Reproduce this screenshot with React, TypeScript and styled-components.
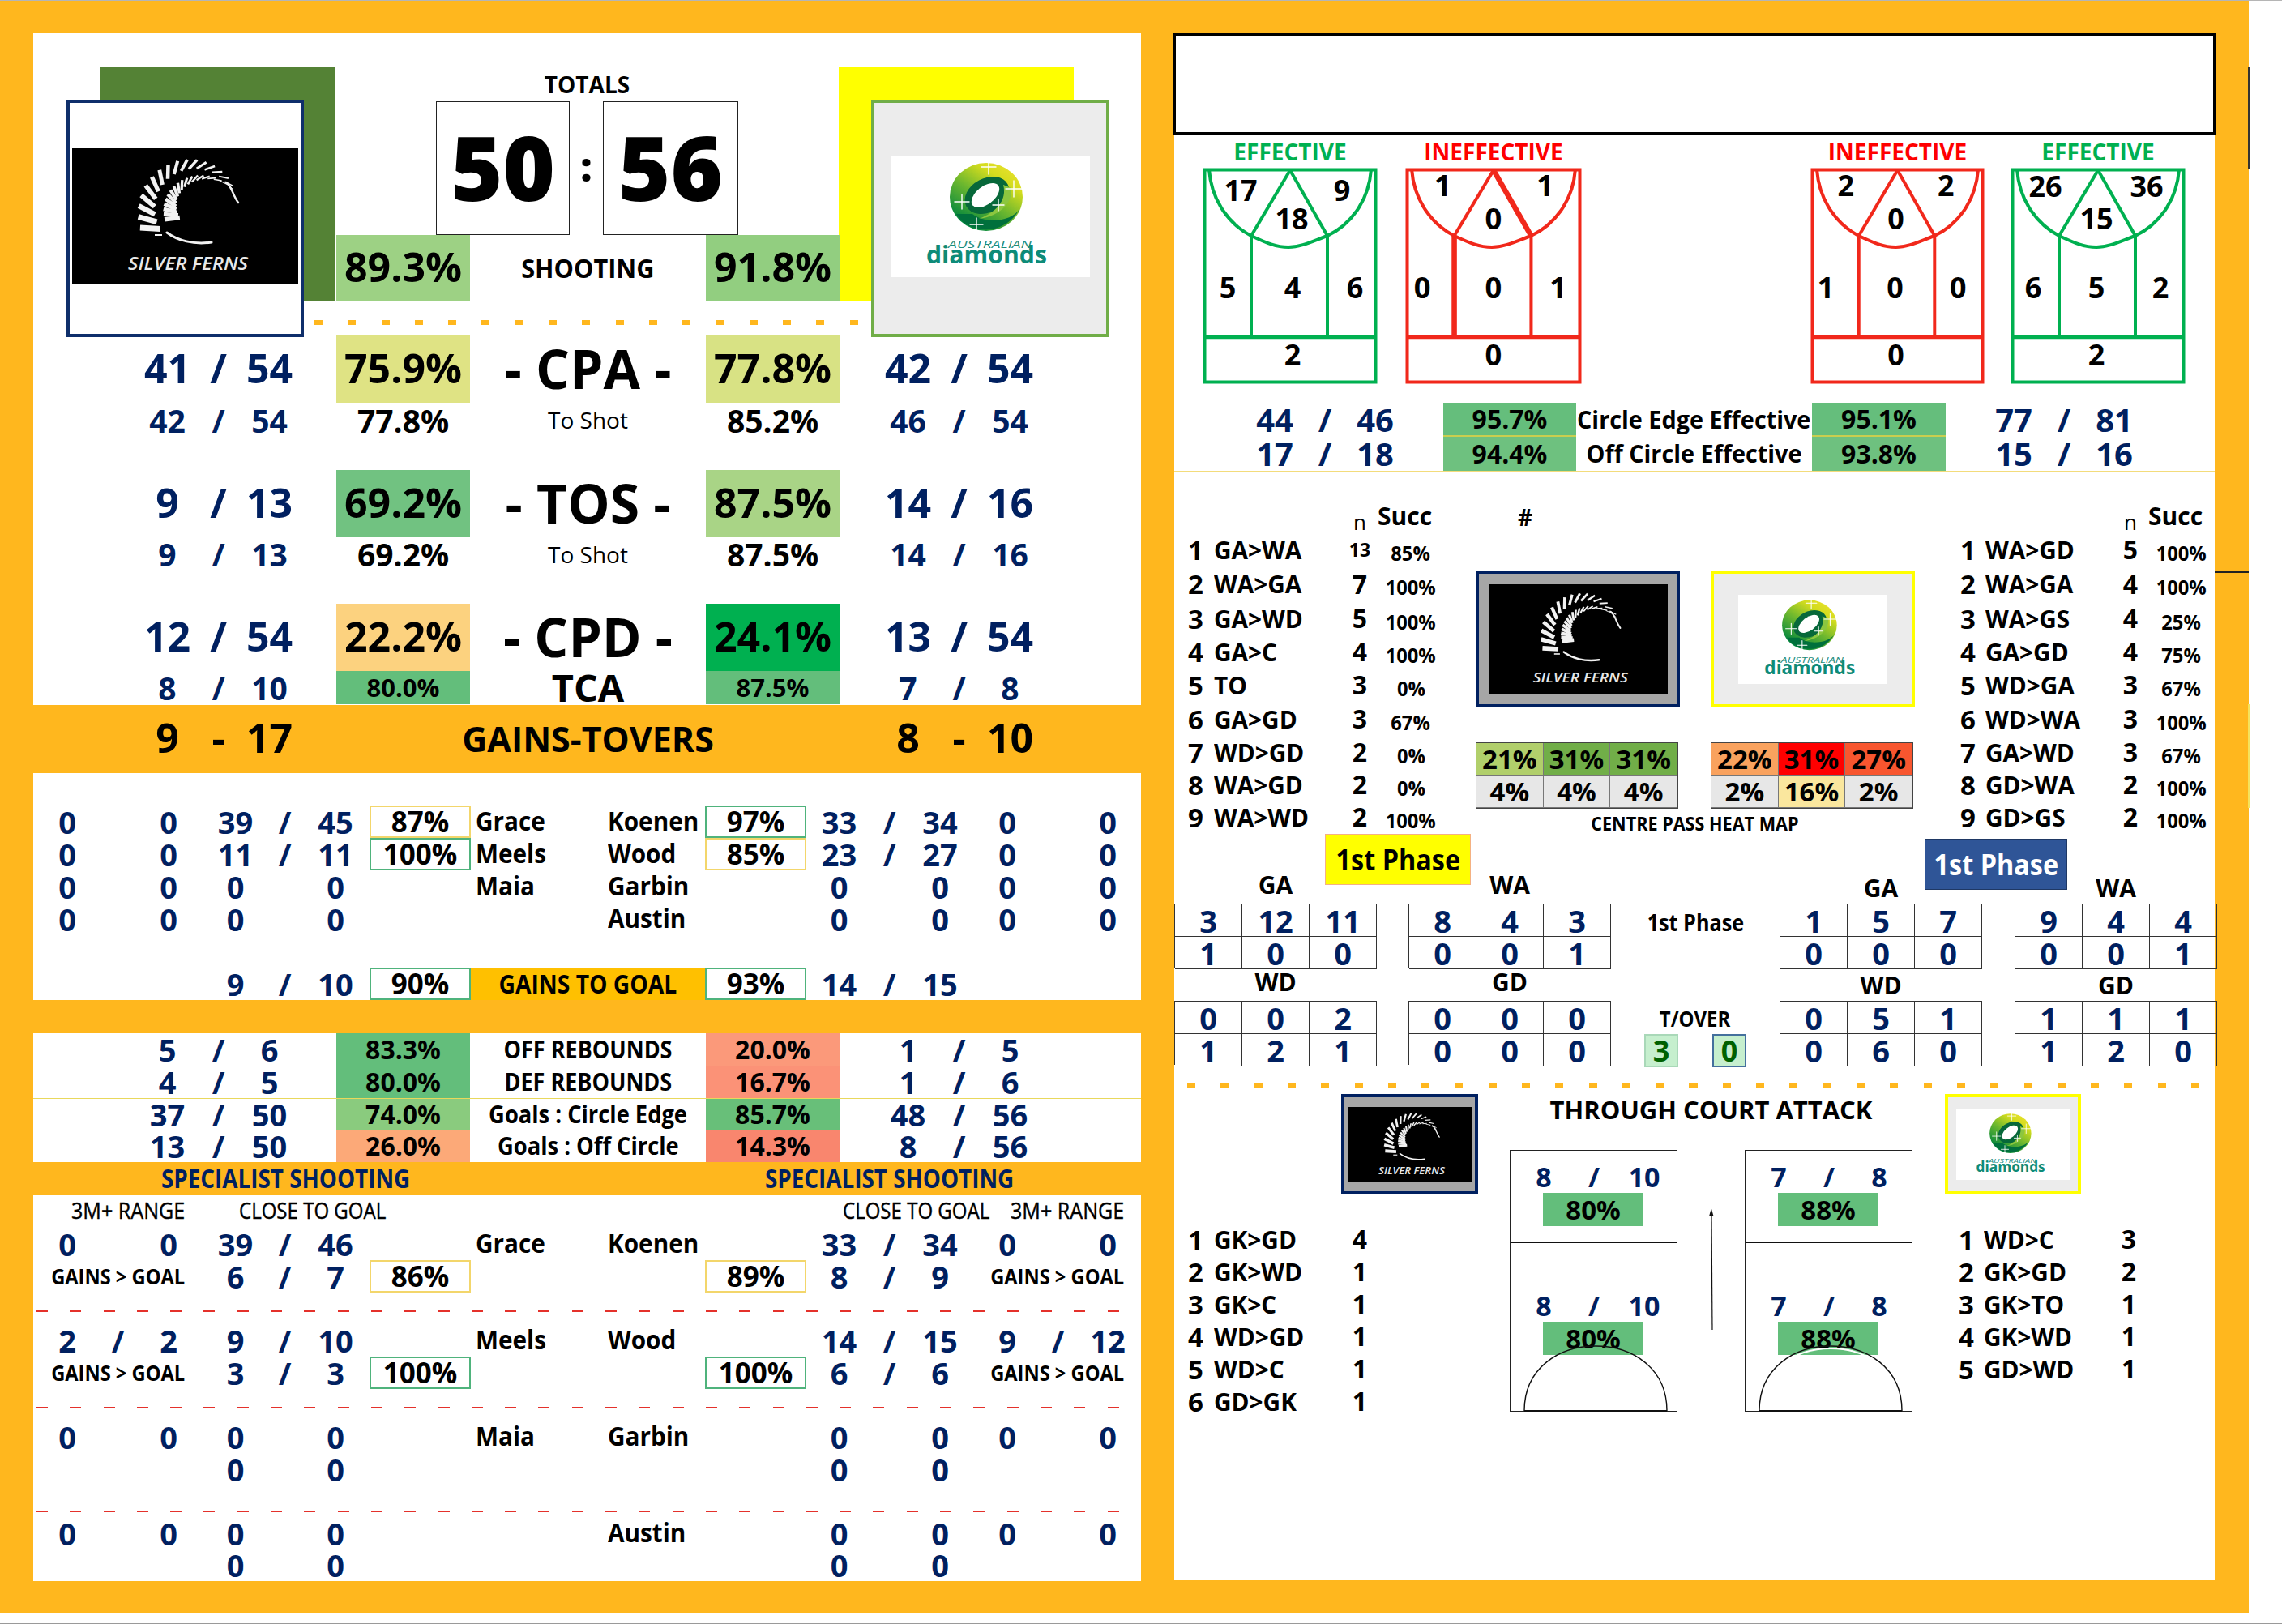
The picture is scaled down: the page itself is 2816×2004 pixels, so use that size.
import React from 'react';
import styled, { createGlobalStyle } from 'styled-components';

const GlobalStyle = createGlobalStyle`
  html, body { margin: 0; padding: 0; background: #fff; }
  * { box-sizing: border-box; }
  body { font-family: "Open Sans", "Liberation Sans", sans-serif; color: #000; }
`;

const NAVY = '#002060';
const ORANGE = '#FFB71E';
const MAIN_COLS = '134px 63px 63px 63px 51px 165px 291px 165px 53px 63px 63px 63px 1fr';
const PLAYER_COLS = '84px 41px 84px 81px 41px 84px 125px 166px 123px 125px 81px 43px 82px 84px 41px 82px';
const EFFECT_COLS = '93px 62px 62px 62px 53px 164px 291px 165px 53px 62px 62px 62px 1fr';

const Page = styled.div`
  width: 2816px;
  height: 2004px;
  border-top: 1px solid #b5b5b5;
  border-bottom: 1px solid #9a9a9a;
  position: relative;
  overflow: hidden;
`;

const Sheet = styled.div`
  width: 2775px;
  height: 1989px;
  background: ${ORANGE};
  padding: 40px 43px 40px 41px;
  display: flex;
  gap: 41px;
`;

const EdgeMark = styled.div<{ $top: number; $h: number; $c: string }>`
  position: absolute;
  left: 2774px;
  top: ${p => p.$top}px;
  width: 2px;
  height: ${p => p.$h}px;
  background: ${p => p.$c};
`;

const EdgeTick = styled.div`
  position: absolute;
  left: 2733px;
  top: 703px;
  width: 42px;
  height: 3px;
  background: #222;
`;

// the source sheet is a slightly squeezed picture, labels follow it
const Sq = styled.span<{ $x: number; $left?: boolean }>`
  display: inline-block;
  transform: scaleX(${p => p.$x});
  transform-origin: ${p => (p.$left ? 'left' : 'center')} center;
  white-space: nowrap;
`;

const LeftPanel = styled.div`
  width: 1367px;
  flex: none;
  display: flex;
  flex-direction: column;
`;

const WhiteBlock = styled.div<{ $h: number }>`
  background: #fff;
  height: ${p => p.$h}px;
  flex: none;
  position: relative;
`;

const TopBlock = styled.div`
  height: 331px;
  position: relative;
`;

const Totals = styled.div`
  height: 84px;
  padding-top: 41px;
  text-align: center;
  font-size: 28px;
  line-height: 44px;
  font-weight: 700;
`;

const ScoreRow = styled.div`
  display: grid;
  grid-template-columns: 165px 41px 167px;
  justify-content: center;
  height: 165px;
`;

const ScoreBox = styled.div`
  border: 1.5px solid #222;
  display: flex;
  align-items: center;
  justify-content: center;
  font-size: 110px;
  font-weight: 800;
  line-height: 1;
  padding-bottom: 6px;
`;

const Colon = styled.div`
  display: flex;
  align-items: center;
  justify-content: center;
  font-size: 50px;
  font-weight: 800;
  line-height: 1;
  padding-bottom: 6px;
`;

const TeamTint = styled.div<{ $left: number; $c: string }>`
  position: absolute;
  left: ${p => p.$left}px;
  top: 42px;
  width: 290px;
  height: 289px;
  background: ${p => p.$c};
`;

const LogoPlacement = styled.div<{ $left: number }>`
  position: absolute;
  left: ${p => p.$left}px;
  top: 82px;
  z-index: 2;
`;

const LogoFrame = styled.div<{ $w: number; $h: number; $border: string; $fill: string; $lift?: number }>`
  width: ${p => p.$w}px;
  height: ${p => p.$h}px;
  border: 4px solid ${p => p.$border};
  background: ${p => p.$fill};
  padding-bottom: ${p => p.$lift ?? 0}px;
  display: flex;
  align-items: center;
  justify-content: center;
  flex: none;
`;

const LogoArt = styled.svg<{ $w: number; $h: number }>`
  width: ${p => p.$w}px;
  height: ${p => p.$h}px;
  display: block;
  flex: none;
`;

const MainRow = styled.div<{ $h: number; $top?: number; $line?: boolean }>`
  display: grid;
  grid-template-columns: ${MAIN_COLS};
  grid-template-rows: 100%;
  height: ${p => p.$h}px;
  margin-top: ${p => p.$top ?? 0}px;
  ${p => (p.$line ? 'border-top: 1.5px solid #E9D85C;' : '')}
`;

const Txt = styled.div<{ $size: number; $weight?: number; $c?: string; $col?: string }>`
  font-size: ${p => p.$size}px;
  font-weight: ${p => p.$weight ?? 700};
  color: ${p => p.$c ?? '#000'};
  line-height: 1;
  padding-bottom: ${p => (p.$size >= 50 ? 4 : 1)}px;
  ${p => (p.$col ? `grid-column: ${p.$col};` : '')}
  display: flex;
  align-items: center;
  justify-content: center;
  white-space: nowrap;
  min-width: 0;
`;

const Pct = styled(Txt)<{ $bg?: string }>`
  background: ${p => p.$bg ?? 'transparent'};
`;

const Dots = styled.div<{ $left: number; $w: number; $top: number; $bottom?: number }>`
  margin: ${p => p.$top}px 0 ${p => p.$bottom ?? 0}px ${p => p.$left}px;
  width: ${p => p.$w}px;
  height: 6px;
  background: repeating-linear-gradient(90deg, ${ORANGE} 0 10px, transparent 10px 41.3px);
`;

const RedDash = styled.div<{ $top: number; $bottom: number }>`
  margin: ${p => p.$top}px 4px ${p => p.$bottom}px 4px;
  height: 2px;
  background: repeating-linear-gradient(90deg, #E4312B 0 14px, transparent 14px 41.3px);
`;

const Band = styled.div<{ $h: number }>`
  height: ${p => p.$h}px;
  flex: none;
`;

const PlayerGrid = styled.div<{ $top?: number; $h?: number }>`
  display: grid;
  grid-template-columns: ${PLAYER_COLS};
  grid-template-rows: 100%;
  height: ${p => p.$h ?? 40}px;
  margin-top: ${p => p.$top ?? 0}px;
`;

const BoxPct = styled(Txt)<{ $tone: string }>`
  border: 2px solid ${p => p.$tone};
  background: #fff;
`;

const Name = styled.div<{ $col: string }>`
  grid-column: ${p => p.$col};
  font-size: 33px;
  font-weight: 700;
  line-height: 38px;
  padding-left: 6px;
  white-space: nowrap;
`;

const NameRight = styled(Name)`
  padding-left: 3px;
`;

const GoldLabel = styled(Txt)`
  background: #FFC000;
`;

const RangeRow = styled.div`
  display: grid;
  grid-template-columns: 47px 207px 745px 207px 1fr;
  height: 40px;
  font-size: 27px;
  line-height: 38px;
  font-weight: 400;
  white-space: nowrap;
  -webkit-text-stroke: 0.4px #000;
`;

const RightPanel = styled.div`
  width: 1284px;
  flex: none;
  height: 1909px;
  background: #fff;
  display: flex;
  flex-direction: column;
`;

const EmptyBanner = styled.div`
  height: 125px;
  width: 1286px;
  margin-left: -1px;
  border: 3px solid #000;
  background: #fff;
  flex: none;
`;

const CourtsRow = styled.div`
  display: grid;
  grid-template-columns: 214px 36px 216px 284px 213px 34px 214px;
  padding-left: 36px;
  flex: none;
`;

const CourtCol = styled.div<{ $col: number }>`
  grid-column: ${p => p.$col};
  display: flex;
  flex-direction: column;
  align-items: center;
`;

const CourtTitle = styled.div<{ $c: string }>`
  height: 42px;
  line-height: 42px;
  font-size: 28px;
  font-weight: 700;
  color: ${p => p.$c};
`;

const CourtSvg = styled.svg`
  width: 100%;
  height: 266px;
  display: block;
  overflow: visible;
`;

const EffectBlock = styled.div`
  margin-top: 23px;
  border-bottom: 2px solid #F3DC7B;
  flex: none;
`;

const EffectRow = styled.div`
  display: grid;
  grid-template-columns: ${EFFECT_COLS};
  grid-template-rows: 100%;
  height: 42px;
`;

const RankSection = styled.div`
  display: grid;
  grid-template-columns: 372px 541px 1fr;
  height: 447px;
  flex: none;
`;

const RankList = styled.div<{ $pad: number; $num: number; $text: number; $rows: string; $top: number }>`
  padding-top: ${p => p.$top}px;
  display: grid;
  grid-template-rows: ${p => p.$rows};
  grid-template-columns: ${p => `${p.$pad}px ${p.$num}px ${p.$text}px 36px 90px`};
  align-items: center;
  align-content: start;
  line-height: 1;
`;

const Rank = styled.div`
  grid-column: 2;
  font-size: 33px;
  font-weight: 700;
`;

const Move = styled.div`
  grid-column: 3;
  font-size: 31px;
  font-weight: 700;
  white-space: nowrap;
`;

const Count = styled.div<{ $small?: boolean }>`
  grid-column: 4;
  font-size: ${p => (p.$small ? 23 : 32)}px;
  font-weight: 700;
  text-align: center;
  white-space: nowrap;
`;

const Succ = styled.div`
  grid-column: 5;
  font-size: 25px;
  font-weight: 700;
  text-align: center;
  padding-top: 8px;
  white-space: nowrap;
`;

const HeadN = styled(Count)`
  font-size: 26px;
  font-weight: 400;
  padding-top: 12px;
`;

const HeadSucc = styled(Succ)`
  font-size: 30px;
  padding-top: 0;
  text-align: left;
  padding-left: 4px;
  margin-top: -2px;
`;

const CenterCol = styled.div`
  display: flex;
  flex-direction: column;
`;

const HashMark = styled.div`
  height: 121px;
  padding: 36px 0 0 52px;
  font-size: 28px;
  font-weight: 700;
  line-height: 38px;
`;

const PairGrid = styled.div`
  display: grid;
  grid-template-columns: 250px 40px 250px;
`;

const HeatWrap = styled(PairGrid)`
  margin-top: 43px;
`;

const Heat = styled.div`
  display: grid;
  grid-template-columns: repeat(3, 1fr);
  grid-auto-rows: 40px;
  border: 1.5px solid #444;
`;

const HeatCell = styled.div<{ $bg: string }>`
  background: ${p => p.$bg};
  border-right: 1px solid #777;
  border-bottom: 1px solid #777;
  font-size: 33px;
  font-weight: 700;
  line-height: 1;
  display: flex;
  align-items: center;
  justify-content: center;
`;

const HeatCaption = styled.div`
  text-align: center;
  font-size: 24px;
  font-weight: 700;
  line-height: 36px;
  height: 36px;
  white-space: nowrap;
`;

const PhaseBlock = styled.div`
  position: relative;
  display: grid;
  grid-template-columns: 250px 39px 250px 208px 250px 40px 250px;
  grid-template-rows: 85px 79px 41px 79px;
  flex: none;
  width: 1287px;
`;

const PhaseBadge = styled.div<{ $left: number; $top: number; $w: number; $bg: string; $c: string; $b: string }>`
  position: absolute;
  left: ${p => p.$left}px;
  top: ${p => p.$top}px;
  width: ${p => p.$w}px;
  height: 63px;
  background: ${p => p.$bg};
  color: ${p => p.$c};
  border: 1.5px solid ${p => p.$b};
  font-size: 36px;
  font-weight: 700;
  line-height: 1;
  display: flex;
  align-items: center;
  justify-content: center;
  white-space: nowrap;
`;

const PosHead = styled.div<{ $col: number; $right?: boolean }>`
  grid-column: ${p => p.$col};
  align-self: end;
  text-align: center;
  font-size: 30px;
  font-weight: 700;
  line-height: 40px;
  margin-bottom: ${p => (p.$right ? 0 : 3)}px;
  transform: translateY(${p => (p.$right ? 1 : 0)}px);
`;

const PosTable = styled.div<{ $col: number }>`
  grid-column: ${p => p.$col};
  display: grid;
  grid-template-columns: repeat(3, 1fr);
  grid-auto-rows: 40px;
  border-top: 1.5px solid #333;
  border-left: 1.5px solid #333;
`;

const PosCell = styled.div`
  border-right: 1.5px solid #333;
  border-bottom: 1.5px solid #333;
  color: ${NAVY};
  font-size: 38px;
  font-weight: 700;
  line-height: 1;
  display: flex;
  align-items: center;
  justify-content: center;
`;

const MidLabel = styled.div`
  grid-column: 4;
  text-align: center;
  font-size: 28px;
  font-weight: 700;
  line-height: 46px;
`;

const MidTover = styled.div`
  grid-column: 4;
  display: flex;
  flex-direction: column;
  align-items: center;
  margin-top: 3px;
`;

const ToverTitle = styled.div`
  font-size: 26px;
  font-weight: 700;
  line-height: 38px;
`;

const ToverRow = styled.div`
  display: flex;
  gap: 42px;
`;

const ToverBox = styled.div<{ $b: string }>`
  width: 42px;
  height: 41px;
  background: #C6EFCE;
  border: 2px solid ${p => p.$b};
  color: #006100;
  font-size: 36px;
  font-weight: 700;
  line-height: 1;
  display: flex;
  align-items: center;
  justify-content: center;
`;

const AttackSection = styled.div`
  display: grid;
  grid-template-columns: 414px 497px 1fr;
  flex: none;
`;

const AttackSide = styled.div<{ $logoLeft: number }>`
  padding: 8px 0 0 ${p => p.$logoLeft}px;
`;

const AttackList = styled(RankList)`
  margin-left: ${p => -1 * (p.$pad > 20 ? 40 : 206)}px;
`;

const AttackCenter = styled.div`
  display: flex;
  flex-direction: column;
`;

const AttackTitle = styled.div`
  height: 77px;
  line-height: 54px;
  text-align: center;
  font-size: 31px;
  font-weight: 700;
  white-space: nowrap;
`;

const DiagramRow = styled.div`
  display: flex;
  justify-content: space-between;
`;

const Diagram = styled.div`
  width: 207px;
  height: 323px;
  border: 1.5px solid #222;
  position: relative;
`;

const Zone = styled.div<{ $h: number; $pad: number; $line?: boolean }>`
  height: ${p => p.$h}px;
  padding-top: ${p => p.$pad}px;
  ${p => (p.$line ? 'border-bottom: 2px solid #111;' : '')}
`;

const ZoneFrac = styled.div`
  display: grid;
  grid-template-columns: repeat(3, 62px);
  grid-template-rows: 100%;
  height: 38px;
  padding-left: 10px;
`;

const ZonePct = styled(Txt)`
  width: 124px;
  height: 41px;
  margin: 1px 0 0 40px;
  background: #63BE7B;
`;

const ArcSvg = styled.svg`
  position: absolute;
  left: 16px;
  bottom: -1px;
  width: 178px;
  height: 82px;
`;

const ArrowSvg = styled.svg`
  width: 20px;
  height: 150px;
  margin-top: 72px;
  flex: none;
`;

// ---- drawings ----

function leaflet(cx: number, cy: number, r: number, deg: number, len: number, slant: number) {
  const a = (deg * Math.PI) / 180;
  const b = ((deg + slant) * Math.PI) / 180;
  const x1 = cx + (r - len / 2) * Math.cos(a);
  const y1 = cy + (r - len / 2) * Math.sin(a);
  const x2 = cx + (r + len / 2) * Math.cos(b);
  const y2 = cy + (r + len / 2) * Math.sin(b);
  return `M${x1.toFixed(1)} ${y1.toFixed(1)}L${x2.toFixed(1)} ${y2.toFixed(1)}`;
}

function buildFrond(count: number, from: number, to: number, r0: number, r1: number, l0: number, l1: number, w0: number, w1: number, curve: number) {
  return Array.from({ length: count }, (_, i) => {
    const t = i / (count - 1);
    const r = r0 + (r1 - r0) * Math.pow(t, curve);
    return {
      d: leaflet(151, 75, r, from + (to - from) * t, l0 + (l1 - l0) * t, 11),
      w: w0 + (w1 - w0) * t,
    };
  });
}

const FERN_LEAVES = [
  ...buildFrond(16, 150, 318, 60, 53, 22, 5, 7, 1.6, 1),
  ...buildFrond(19, 150, 322, 30, 52, 18, 3, 5.5, 1, 2.6),
];

function FernLogo({ w, h }: { w: number; h: number }) {
  return (
    <LogoArt $w={w} $h={h} viewBox="0 0 279 168" preserveAspectRatio="none">
      <rect width="279" height="168" fill="#000" />
      {FERN_LEAVES.map((l, i) => (
        <path key={i} d={l.d} stroke="#f2f2f2" strokeWidth={l.w} fill="none" />
      ))}
      <path d="M117 104 C130 114 150 119 172 116" stroke="#f2f2f2" strokeWidth="3" fill="none" strokeLinecap="round" />
      <path d="M190 42 C198 48 198 58 205 67" stroke="#f2f2f2" strokeWidth="2.5" fill="none" strokeLinecap="round" />
      <rect x="102" y="106" width="9" height="2" fill="#f2f2f2" />
      <text x="143" y="150" textAnchor="middle" fill="#e8e8e8" fontSize="21" fontStyle="italic" fontWeight="600" textLength="148" lengthAdjust="spacingAndGlyphs" fontFamily="Open Sans">SILVER FERNS</text>
    </LogoArt>
  );
}

function Sparkle({ x, y, r }: { x: number; y: number; r: number }) {
  return (
    <path
      d={`M${x - r} ${y}L${x + r} ${y}M${x} ${y - r}L${x} ${y + r}`}
      stroke="#fff"
      strokeWidth="1.4"
      strokeLinecap="round"
    />
  );
}

function DiamondsLogo({ w, h }: { w: number; h: number }) {
  return (
    <LogoArt $w={w} $h={h} viewBox="0 0 245 150" preserveAspectRatio="none">
      <defs>
        <linearGradient id="ringFill" x1="0.2" y1="0.9" x2="0.8" y2="0.05">
          <stop offset="0" stopColor="#00853E" />
          <stop offset="0.45" stopColor="#6CB72F" />
          <stop offset="0.8" stopColor="#D3DC1E" />
          <stop offset="1" stopColor="#E6E02A" />
        </linearGradient>
      </defs>
      <rect width="245" height="150" fill="#fff" />
      <ellipse cx="117" cy="51" rx="45" ry="42" fill="url(#ringFill)" />
      <path d="M80 72 C95 97 140 100 158 66 C150 80 118 86 100 72 Z" fill="#00703C" />
      <ellipse cx="118" cy="49" rx="29" ry="21" transform="rotate(-28 118 49)" fill="#07683A" />
      <path d="M148 40 C150 62 128 76 108 78 C130 70 143 54 138 36 Z" fill="#8CC63F" />
      <ellipse cx="116" cy="49" rx="20" ry="11" transform="rotate(-38 116 49)" fill="#fff" />
      <Sparkle x={120} y={14} r={9} />
      <Sparkle x={151} y={41} r={10} />
      <Sparkle x={87} y={57} r={9} />
      <Sparkle x={132} y={61} r={7} />
      <Sparkle x={105} y={85} r={8} />
      <text x="70" y="114" fill="#1B8C7C" fontSize="12" fontStyle="italic" textLength="103" lengthAdjust="spacingAndGlyphs" fontFamily="Open Sans">AUSTRALIAN</text>
      <text x="43" y="133" fill="#0E8B78" fontSize="31" fontWeight="700" textLength="149" lengthAdjust="spacingAndGlyphs" fontFamily="Open Sans">diamonds</text>
    </LogoArt>
  );
}

const FernFrame = ({ big }: { big: 'top' | 'mid' | 'small' }) => {
  if (big === 'top') return <LogoFrame $w={293} $h={293} $border="#0F2F6B" $fill="#fff" $lift={6}><FernLogo w={279} h={168} /></LogoFrame>;
  if (big === 'mid') return <LogoFrame $w={252} $h={169} $border={NAVY} $fill="#A6A6A6"><FernLogo w={221} h={135} /></LogoFrame>;
  return <LogoFrame $w={169} $h={124} $border={NAVY} $fill="#A6A6A6"><FernLogo w={154} h={93} /></LogoFrame>;
};

const DiamondFrame = ({ big }: { big: 'top' | 'mid' | 'small' }) => {
  if (big === 'top') return <LogoFrame $w={294} $h={293} $border="#70AD47" $fill="#ECECEC" $lift={6}><DiamondsLogo w={245} h={150} /></LogoFrame>;
  if (big === 'mid') return <LogoFrame $w={252} $h={169} $border="#FFFF00" $fill="#ECECEC"><DiamondsLogo w={184} h={110} /></LogoFrame>;
  return <LogoFrame $w={168} $h={124} $border="#FFFF00" $fill="#ECECEC"><DiamondsLogo w={140} h={87} /></LogoFrame>;
};

type CourtNum = [string, number, number];

function Court({ color, nums, heavy = [] }: { color: string; nums: CourtNum[]; heavy?: string[] }) {
  const sw = (k: string) => (heavy.includes(k) ? 6.5 : 4);
  return (
    <CourtSvg viewBox="0 0 214 266" preserveAspectRatio="none">
      <g stroke={color} fill="none" strokeWidth="4">
        <rect x="1.5" y="1.5" width="211" height="262" />
        <path d="M7 1 C10 42 34 70 59 83 C78 92 90 97 105 97 C120 97 134 90 153 83 C180 70 204 42 207 1" />
        <path d="M107 2 L59 83" strokeWidth={sw('tl')} />
        <path d="M107 2 L153 83" strokeWidth={sw('tr')} />
        <path d="M59 83 L59 207" strokeWidth={sw('vl')} />
        <path d="M153 83 L153 207" strokeWidth={sw('vr')} />
        <path d="M1 208 L213 208" strokeWidth="4.5" />
      </g>
      {nums.map(([v, x, y], i) => (
        <text key={i} x={x} y={y} textAnchor="middle" dominantBaseline="central" fontSize="36" fontWeight="700" fontFamily="Open Sans">{v}</text>
      ))}
    </CourtSvg>
  );
}

// ---- bits of rows ----

function Frac({ a, b, size, weight, c = NAVY, sep = '/', start }: { a: string; b: string; size: number; weight?: number; c?: string; sep?: string; start?: number }) {
  return (
    <>
      <Txt $size={size} $weight={weight} $c={c} $col={start ? `${start}` : undefined}>{a}</Txt>
      <Txt $size={size} $weight={weight} $c={c}>{sep}</Txt>
      <Txt $size={size} $weight={weight} $c={c}>{b}</Txt>
    </>
  );
}

function StatRow({ h, top, l, r, lp, rp, lbg, rbg, mid, size, pctSize, midSize, midWeight, midSq = 1, line }: {
  h: number; top?: number; l: [string, string]; r: [string, string]; lp: string; rp: string; lbg?: string; rbg?: string;
  mid: string; size: number; pctSize: number; midSize: number; midWeight?: number; midSq?: number; line?: boolean;
}) {
  return (
    <MainRow $h={h} $top={top} $line={line}>
      <Frac a={l[0]} b={l[1]} size={size} start={2} />
      <Pct $size={pctSize} $bg={lbg} $col="6">{lp}</Pct>
      <Txt $size={midSize} $weight={midWeight}><Sq $x={midSq}>{mid}</Sq></Txt>
      <Pct $size={pctSize} $bg={rbg}>{rp}</Pct>
      <Frac a={r[0]} b={r[1]} size={size} start={10} />
    </MainRow>
  );
}

const V = 38;
const Triple = ({ v, col }: { v?: string[]; col: number }) =>
  v ? (
    <>
      {v.map((t, i) => (
        <Txt key={i} $size={V} $c={NAVY} $col={`${col + i}`}>{t}</Txt>
      ))}
    </>
  ) : null;

type PlayerProps = {
  a?: string[]; b?: string[]; c?: string[]; d?: string[];
  lbox?: [string, string]; rbox?: [string, string];
  ln?: string; rn?: string; gold?: string; gains?: boolean; top?: number;
};

const Gains = ({ col }: { col: string }) => (
  <Txt $size={26} $col={col}><Sq $x={0.91}>GAINS &gt; GOAL</Sq></Txt>
);

function PlayerRow({ a, b, c, d, lbox, rbox, ln, rn, gold, gains, top }: PlayerProps) {
  return (
    <PlayerGrid $top={top}>
      <Triple v={a} col={1} />
      {gains && <Gains col="1 / 4" />}
      <Triple v={b} col={4} />
      {lbox && <BoxPct $size={35} $tone={lbox[1]} $col="7">{lbox[0]}</BoxPct>}
      {ln && <Name $col="8"><Sq $x={0.9} $left>{ln}</Sq></Name>}
      {gold && <GoldLabel $size={33} $col="8 / 10"><Sq $x={0.855}>{gold}</Sq></GoldLabel>}
      {rn && <NameRight $col="9"><Sq $x={0.9} $left>{rn}</Sq></NameRight>}
      {rbox && <BoxPct $size={35} $tone={rbox[1]} $col="10">{rbox[0]}</BoxPct>}
      <Triple v={c} col={11} />
      <Triple v={d} col={14} />
      {gains && <Gains col="14 / 17" />}
    </PlayerGrid>
  );
}

const Z = ['0', '', '0'];
const YEL = '#F3D66B';
const GRN = '#4FB37C';

type RankRow = [string, string, string, string?, boolean?];

const LEFT_RANKS: RankRow[] = [
  ['1', 'GA>WA', '13', '85%', true], ['2', 'WA>GA', '7', '100%'], ['3', 'GA>WD', '5', '100%'],
  ['4', 'GA>C', '4', '100%'], ['5', 'TO', '3', '0%'], ['6', 'GA>GD', '3', '67%'],
  ['7', 'WD>GD', '2', '0%'], ['8', 'WA>GD', '2', '0%'], ['9', 'WA>WD', '2', '100%'],
];
const RIGHT_RANKS: RankRow[] = [
  ['1', 'WA>GD', '5', '100%'], ['2', 'WA>GA', '4', '100%'], ['3', 'WA>GS', '4', '25%'],
  ['4', 'GA>GD', '4', '75%'], ['5', 'WD>GA', '3', '67%'], ['6', 'WD>WA', '3', '100%'],
  ['7', 'GA>WD', '3', '67%'], ['8', 'GD>WA', '2', '100%'], ['9', 'GD>GS', '2', '100%'],
];
const LEFT_ATTACK: RankRow[] = [
  ['1', 'GK>GD', '4'], ['2', 'GK>WD', '1'], ['3', 'GK>C', '1'], ['4', 'WD>GD', '1'], ['5', 'WD>C', '1'], ['6', 'GD>GK', '1'],
];
const RIGHT_ATTACK: RankRow[] = [
  ['1', 'WD>C', '3'], ['2', 'GK>GD', '2'], ['3', 'GK>TO', '1'], ['4', 'GK>WD', '1'], ['5', 'GD>WD', '1'],
];
const RANK_ROWS = '38px 42px 43px 42px 40px 42px 42px 40px 40px 40px';

const RankLines = ({ rows }: { rows: RankRow[] }) => (
  <>
    {rows.map(([n, m, c, s, small]) => (
      <React.Fragment key={n}>
        <Rank>{n}</Rank>
        <Move><Sq $x={0.96} $left>{m}</Sq></Move>
        <Count $small={small}>{c}</Count>
        {s && <Succ><Sq $x={0.95}>{s}</Sq></Succ>}
      </React.Fragment>
    ))}
  </>
);

const HeadLine = () => (
  <>
    <HeadN>n</HeadN>
    <HeadSucc>Succ</HeadSucc>
  </>
);

const HEAT_LEFT: [string, string][] = [['21%', '#B1CF6B'], ['31%', '#71AE48'], ['31%', '#71AE48'], ['4%', '#E7E7E7'], ['4%', '#E7E7E7'], ['4%', '#E7E7E7']];
const HEAT_RIGHT: [string, string][] = [['22%', '#F9A25E'], ['31%', '#FF0000'], ['27%', '#F8562F'], ['2%', '#E7E7E7'], ['16%', '#FAE79E'], ['2%', '#E7E7E7']];

const PosGrid = ({ col, vals }: { col: number; vals: string[] }) => (
  <PosTable $col={col}>
    {vals.map((v, i) => <PosCell key={i}>{v}</PosCell>)}
  </PosTable>
);

const Arc = ({ halo }: { halo?: boolean }) => (
  <ArcSvg viewBox="0 0 178 82" preserveAspectRatio="none">
    {halo && <path d="M4 81 C4 30 45 4 89 4 C133 4 174 30 174 81" stroke="#fff" strokeWidth="2" fill="none" />}
    <path d="M1 81 C1 28 44 1 89 1 C134 1 177 28 177 81" stroke="#111" strokeWidth="1.4" fill="none" />
    <path d="M1 81 L177 81" stroke="#111" strokeWidth="2" />
  </ArcSvg>
);

function AttackDiagram({ a, b, pct, halo }: { a: string; b: string; pct: string; halo?: boolean }) {
  return (
    <Diagram>
      <Zone $h={114} $pad={13} $line>
        <ZoneFrac><Frac a={a} b={b} size={34} /></ZoneFrac>
        <ZonePct $size={33}>{pct}</ZonePct>
      </Zone>
      <Zone $h={206} $pad={58}>
        <ZoneFrac><Frac a={a} b={b} size={34} /></ZoneFrac>
        <ZonePct $size={33}>{pct}</ZonePct>
      </Zone>
      <Arc halo={halo} />
    </Diagram>
  );
}

const FRAC_B = 50;
const PCT_B = 50;
const MID_B = 66;

export default function App() {
  return (
    <Page>
      <GlobalStyle />
      <EdgeMark $top={82} $h={126} $c="#333" />
      <EdgeMark $top={868} $h={128} $c="#F5E35C" />
      <EdgeTick />
      <Sheet>
        <LeftPanel>
          <WhiteBlock $h={829}>
            <TopBlock>
              <TeamTint $left={83} $c="#548235" />
              <TeamTint $left={994} $c="#FFFF00" />
              <LogoPlacement $left={41}><FernFrame big="top" /></LogoPlacement>
              <LogoPlacement $left={1034}><DiamondFrame big="top" /></LogoPlacement>
              <Totals>TOTALS</Totals>
              <ScoreRow>
                <ScoreBox>50</ScoreBox>
                <Colon>:</Colon>
                <ScoreBox>56</ScoreBox>
              </ScoreRow>
              <MainRow $h={82} style={{ position: 'relative', zIndex: 1 }}>
                <Pct $size={PCT_B} $col="6" $bg="#9DD184">89.3%</Pct>
                <Txt $size={33} $col="7"><Sq $x={0.93}>SHOOTING</Sq></Txt>
                <Pct $size={PCT_B} $col="8" $bg="#92CE80">91.8%</Pct>
              </MainRow>
            </TopBlock>
            <Dots $left={347} $w={674} $top={23} $bottom={13} />

            <StatRow h={83} l={['41', '54']} r={['42', '54']} lp="75.9%" rp="77.8%" lbg="#DFE384" rbg="#D8E284" mid="- CPA -" size={FRAC_B} pctSize={PCT_B} midSize={MID_B} />
            <StatRow h={43} l={['42', '54']} r={['46', '54']} lp="77.8%" rp="85.2%" mid="To Shot" size={39} pctSize={39} midSize={28} midWeight={400} />
            <StatRow h={83} top={40} l={['9', '13']} r={['14', '16']} lp="69.2%" rp="87.5%" lbg="#71C281" rbg="#A9D486" mid="- TOS -" size={FRAC_B} pctSize={PCT_B} midSize={MID_B} />
            <StatRow h={42} l={['9', '13']} r={['14', '16']} lp="69.2%" rp="87.5%" mid="To Shot" size={39} pctSize={39} midSize={28} midWeight={400} />
            <StatRow h={83} top={40} l={['12', '54']} r={['13', '54']} lp="22.2%" rp="24.1%" lbg="#FCD27F" rbg="#00B050" mid="- CPD -" size={FRAC_B} pctSize={PCT_B} midSize={MID_B} />
            <StatRow h={41} l={['8', '10']} r={['7', '8']} lp="80.0%" rp="87.5%" lbg="#63BE7B" rbg="#63BE7B" mid="TCA" size={39} pctSize={31} midSize={47} />
          </WhiteBlock>

          <Band $h={84}>
            <MainRow $h={84}>
              <Frac a="9" b="17" size={FRAC_B} c="#000" sep="-" start={2} />
              <Txt $size={43} $col="7">GAINS-TOVERS</Txt>
              <Frac a="8" b="10" size={FRAC_B} c="#000" sep="-" start={10} />
            </MainRow>
          </Band>

          <WhiteBlock $h={280}>
            <PlayerRow top={40} a={Z} b={['39', '/', '45']} lbox={['87%', YEL]} ln="Grace" rn="Koenen" rbox={['97%', GRN]} c={['33', '/', '34']} d={Z} />
            <PlayerRow a={Z} b={['11', '/', '11']} lbox={['100%', GRN]} ln="Meels" rn="Wood" rbox={['85%', YEL]} c={['23', '/', '27']} d={Z} />
            <PlayerRow a={Z} b={Z} ln="Maia" rn="Garbin" c={Z} d={Z} />
            <PlayerRow a={Z} b={Z} rn="Austin" c={Z} d={Z} />
            <PlayerRow top={40} b={['9', '/', '10']} lbox={['90%', GRN]} gold="GAINS TO GOAL" rbox={['93%', GRN]} c={['14', '/', '15']} />
          </WhiteBlock>

          <Band $h={41} />

          <WhiteBlock $h={159}>
            <StatRow h={40} l={['5', '6']} r={['1', '5']} lp="83.3%" rp="20.0%" lbg="#63BE7B" rbg="#FB997A" mid="OFF REBOUNDS" size={38} pctSize={32} midSize={30} midSq={0.9} />
            <StatRow h={40} l={['4', '5']} r={['1', '6']} lp="80.0%" rp="16.7%" lbg="#63BE7B" rbg="#FB9277" mid="DEF REBOUNDS" size={38} pctSize={32} midSize={30} midSq={0.9} />
            <StatRow h={40} line l={['37', '50']} r={['48', '56']} lp="74.0%" rp="85.7%" lbg="#8ACB7E" rbg="#68BF79" mid="Goals : Circle Edge" size={38} pctSize={32} midSize={30} midSq={0.91} />
            <StatRow h={39} l={['13', '50']} r={['8', '56']} lp="26.0%" rp="14.3%" lbg="#FCA978" rbg="#F9866E" mid="Goals : Off Circle" size={38} pctSize={32} midSize={30} midSq={0.91} />
          </WhiteBlock>

          <Band $h={41}>
            <PlayerGrid>
              <Txt $size={32} $c={NAVY} $col="4 / 7"><Sq $x={0.87}>SPECIALIST SHOOTING</Sq></Txt>
              <Txt $size={32} $c={NAVY} $col="11 / 14"><Sq $x={0.87}>SPECIALIST SHOOTING</Sq></Txt>
            </PlayerGrid>
          </Band>

          <WhiteBlock $h={476}>
            <RangeRow>
              <span />
              <span><Sq $x={0.93} $left>3M+ RANGE</Sq></span>
              <span><Sq $x={0.89} $left>CLOSE TO GOAL</Sq></span>
              <span><Sq $x={0.89} $left>CLOSE TO GOAL</Sq></span>
              <span><Sq $x={0.93} $left>3M+ RANGE</Sq></span>
            </RangeRow>
            <PlayerRow a={Z} b={['39', '/', '46']} ln="Grace" rn="Koenen" c={['33', '/', '34']} d={Z} />
            <PlayerRow gains b={['6', '/', '7']} lbox={['86%', YEL]} rbox={['89%', YEL]} c={['8', '/', '9']} />
            <RedDash $top={22} $bottom={15} />
            <PlayerRow a={['2', '/', '2']} b={['9', '/', '10']} ln="Meels" rn="Wood" c={['14', '/', '15']} d={['9', '/', '12']} />
            <PlayerRow gains b={['3', '/', '3']} lbox={['100%', GRN]} rbox={['100%', GRN]} c={['6', '/', '6']} />
            <RedDash $top={22} $bottom={15} />
            <PlayerRow a={Z} b={Z} ln="Maia" rn="Garbin" c={Z} d={Z} />
            <PlayerRow b={Z} c={Z} />
            <RedDash $top={31} $bottom={6} />
            <PlayerRow a={Z} b={Z} rn="Austin" c={Z} d={Z} />
            <PlayerGrid $h={38}>
              <Triple v={Z} col={4} />
              <Triple v={Z} col={11} />
            </PlayerGrid>
          </WhiteBlock>
        </LeftPanel>

        <RightPanel>
          <EmptyBanner />
          <CourtsRow>
            <CourtCol $col={1}>
              <CourtTitle $c="#00B050">EFFECTIVE</CourtTitle>
              <Court color="#00B050" nums={[['17', 46, 26], ['9', 171, 26], ['18', 109, 61], ['5', 30, 146], ['4', 110, 146], ['6', 187, 146], ['2', 110, 229]]} />
            </CourtCol>
            <CourtCol $col={3}>
              <CourtTitle $c="#FF0000">INEFFECTIVE</CourtTitle>
              <Court color="#F1281B" heavy={['tr', 'vl']} nums={[['1', 45, 20], ['1', 170, 20], ['0', 107, 61], ['0', 20, 146], ['0', 107, 146], ['1', 186, 146], ['0', 107, 229]]} />
            </CourtCol>
            <CourtCol $col={5}>
              <CourtTitle $c="#FF0000">INEFFECTIVE</CourtTitle>
              <Court color="#F1281B" nums={[['2', 43, 20], ['2', 167, 20], ['0', 105, 61], ['1', 18, 146], ['0', 104, 146], ['0', 182, 146], ['0', 105, 229]]} />
            </CourtCol>
            <CourtCol $col={7}>
              <CourtTitle $c="#00B050">EFFECTIVE</CourtTitle>
              <Court color="#00B050" nums={[['26', 42, 21], ['36', 167, 21], ['15', 105, 61], ['6', 27, 146], ['5', 105, 146], ['2', 184, 146], ['2', 105, 229]]} />
            </CourtCol>
          </CourtsRow>

          <EffectBlock>
            <EffectRow>
              <Frac a="44" b="46" size={40} start={2} />
              <Pct $size={32} $col="6" $bg="#65BE7C" style={{ borderBottom: '2px solid #C9CE4F' }}>95.7%</Pct>
              <Txt $size={30}><Sq $x={0.96}>Circle Edge Effective</Sq></Txt>
              <Pct $size={32} $bg="#65BE7C" style={{ borderBottom: '2px solid #C9CE4F' }}>95.1%</Pct>
              <Frac a="77" b="81" size={40} start={10} />
            </EffectRow>
            <EffectRow>
              <Frac a="17" b="18" size={40} start={2} />
              <Pct $size={32} $col="6" $bg="#6EC17F">94.4%</Pct>
              <Txt $size={30}><Sq $x={0.96}>Off Circle Effective</Sq></Txt>
              <Pct $size={32} $bg="#6EC17F">93.8%</Pct>
              <Frac a="15" b="16" size={40} start={10} />
            </EffectRow>
          </EffectBlock>

          <RankSection>
            <RankList $top={36} $pad={17} $num={32} $text={162} $rows={RANK_ROWS}>
              <HeadLine />
              <RankLines rows={LEFT_RANKS} />
            </RankList>
            <CenterCol>
              <HashMark>#</HashMark>
              <PairGrid>
                <FernFrame big="mid" />
                <span />
                <DiamondFrame big="mid" />
              </PairGrid>
              <HeatWrap>
                <Heat>{HEAT_LEFT.map(([t, bg], i) => <HeatCell key={i} $bg={bg}>{t}</HeatCell>)}</Heat>
                <span />
                <Heat>{HEAT_RIGHT.map(([t, bg], i) => <HeatCell key={i} $bg={bg}>{t}</HeatCell>)}</Heat>
              </HeatWrap>
              <HeatCaption><Sq $x={0.9}>CENTRE PASS HEAT MAP</Sq></HeatCaption>
            </CenterCol>
            <RankList $top={36} $pad={57} $num={31} $text={161} $rows={RANK_ROWS}>
              <HeadLine />
              <RankLines rows={RIGHT_RANKS} />
            </RankList>
          </RankSection>

          <PhaseBlock>
            <PhaseBadge $left={186} $top={-1} $w={180} $bg="#FFFF00" $c="#000" $b="#F4B183"><Sq $x={0.9}>1st Phase</Sq></PhaseBadge>
            <PhaseBadge $left={926} $top={5} $w={176} $bg="#2F5597" $c="#fff" $b="#1F3864"><Sq $x={0.9}>1st Phase</Sq></PhaseBadge>

            <PosHead $col={1}>GA</PosHead>
            <PosHead $col={3}>WA</PosHead>
            <PosHead $col={5} $right>GA</PosHead>
            <PosHead $col={7} $right>WA</PosHead>

            <PosGrid col={1} vals={['3', '12', '11', '1', '0', '0']} />
            <PosGrid col={3} vals={['8', '4', '3', '0', '0', '1']} />
            <MidLabel><Sq $x={0.9}>1st Phase</Sq></MidLabel>
            <PosGrid col={5} vals={['1', '5', '7', '0', '0', '0']} />
            <PosGrid col={7} vals={['9', '4', '4', '0', '0', '1']} />

            <PosHead $col={1}>WD</PosHead>
            <PosHead $col={3}>GD</PosHead>
            <PosHead $col={5} $right>WD</PosHead>
            <PosHead $col={7} $right>GD</PosHead>

            <PosGrid col={1} vals={['0', '0', '2', '1', '2', '1']} />
            <PosGrid col={3} vals={['0', '0', '0', '0', '0', '0']} />
            <MidTover>
              <ToverTitle><Sq $x={0.92}>T/OVER</Sq></ToverTitle>
              <ToverRow>
                <ToverBox $b="#A9D8B8">3</ToverBox>
                <ToverBox $b="#44709D">0</ToverBox>
              </ToverRow>
            </MidTover>
            <PosGrid col={5} vals={['0', '5', '1', '0', '6', '0']} />
            <PosGrid col={7} vals={['1', '1', '1', '1', '2', '0']} />
          </PhaseBlock>

          <Dots $left={16} $w={1260} $top={22} $bottom={0} />

          <AttackSection>
            <AttackSide $logoLeft={206}>
              <FernFrame big="small" />
              <AttackList $top={35} $pad={17} $num={32} $text={162} $rows="repeat(6, 40px)">
                <RankLines rows={LEFT_ATTACK} />
              </AttackList>
            </AttackSide>
            <AttackCenter>
              <AttackTitle>THROUGH COURT ATTACK</AttackTitle>
              <DiagramRow>
                <AttackDiagram a="8" b="10" pct="80%" />
                <ArrowSvg viewBox="0 0 20 150">
                  <path d="M10 8 L11 150" stroke="#111" strokeWidth="1.2" fill="none" />
                  <path d="M7 10 L9.8 0 L12.6 10 Z" fill="#111" />
                </ArrowSvg>
                <AttackDiagram a="7" b="8" pct="88%" halo />
              </DiagramRow>
            </AttackCenter>
            <AttackSide $logoLeft={40}>
              <DiamondFrame big="small" />
              <AttackList $top={35} $pad={57} $num={31} $text={161} $rows="repeat(6, 40px)">
                <RankLines rows={RIGHT_ATTACK} />
              </AttackList>
            </AttackSide>
          </AttackSection>
        </RightPanel>
      </Sheet>
    </Page>
  );
}
